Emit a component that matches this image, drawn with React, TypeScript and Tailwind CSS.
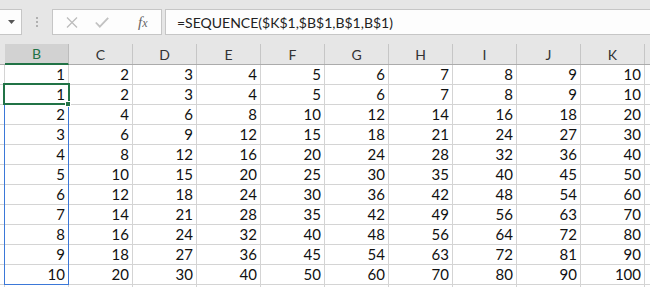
import React from 'react';

// Excel-ish sheet: formula bar + grid B..L, SEQUENCE spill in B2:B11
const COLS = ['B', 'C', 'D', 'E', 'F', 'G', 'H', 'I', 'J', 'K'];
const cellFont = { fontFamily: 'Lato, "Liberation Sans", sans-serif' };

function rowValues(r: number): number[] {
  // row 0 = header row 1..10, rows 1..10 = multiplication table
  return COLS.map((_, i) => (r === 0 ? i + 1 : r * (i + 1)));
}

export default function App() {
  const rows = Array.from({ length: 12 }, (_, r) => r);
  return (
    <div className="w-[650px] h-[287px] overflow-hidden bg-white relative select-none" style={cellFont}>
      {/* ── formula bar ── */}
      <div className="h-[44px] bg-[#e6e6e6] flex items-start pt-[9px]">
        <div className="w-[22px] h-[26px] bg-[#fdfdfd] border border-l-0 border-[#c6c6c6] flex items-center justify-center pl-[1px]">
          <svg width="7" height="4" viewBox="0 0 7 4"><path d="M0 0h7L3.5 4z" fill="#555" /></svg>
        </div>
        <div className="w-[30px] h-[26px] flex flex-col items-center justify-center gap-[2px]">
          <span className="w-[2px] h-[2px] bg-[#b0b0b0]" />
          <span className="w-[2px] h-[2px] bg-[#b0b0b0]" />
          <span className="w-[2px] h-[2px] bg-[#b0b0b0]" />
        </div>
        <div className="w-[110px] h-[26px] bg-[#fdfdfd] border border-[#c6c6c6] flex items-center">
          <svg className="ml-[13px]" width="12" height="11" viewBox="0 0 12 11">
            <path d="M1 0.5l10 10M11 0.5l-10 10" stroke="#bdbdbd" strokeWidth="1.3" fill="none" />
          </svg>
          <svg className="ml-[17px]" width="14" height="11" viewBox="0 0 14 11">
            <path d="M0.8 5.5l4 4.2L13.2 0.8" stroke="#c2c2c2" strokeWidth="1.8" fill="none" />
          </svg>
          <span className="ml-[29px] text-[15px] leading-none italic text-[#666]" style={{ fontFamily: '"Liberation Serif", serif' }}>
            f<span className="text-[12px]">x</span>
          </span>
        </div>
        <div className="ml-[3px] flex-1 h-[26px] bg-[#fdfdfd] border border-r-0 border-[#c6c6c6] flex items-center pl-[11px]">
          <span className="text-[14px] text-[#222]" style={{ fontFamily: 'Lato, "Noto Sans", sans-serif' }}>
            =SEQUENCE($K$1,$B$1,B$1,B$1)
          </span>
        </div>
      </div>

      {/* ── column headers ── */}
      <div className="h-[21px] flex bg-[#e6e6e6] border-b border-[#ababab]">
        <div className="w-[5px] shrink-0" />
        {COLS.map((c) => (
          <div
            key={c}
            className={`w-[64px] shrink-0 flex items-center justify-center text-[14px] ${
              c === 'B'
                ? 'bg-[#d2d2d2] text-[#217346] border-b-2 border-[#217346] -mb-[1px] border-r border-r-[#bcbcbc]'
                : 'text-[#333] border-r border-[#c6c6c6]'
            }`}
          >
            {c}
          </div>
        ))}
        <div className="flex-1" />
      </div>

      {/* ── grid ── */}
      <div className="flex flex-col">
        {rows.map((r) => (
          <div key={r} className="h-[20px] flex shrink-0">
            <div className="w-[5px] shrink-0 border-r border-b border-[#d4d4d4]" />
            {(r <= 10 ? rowValues(r) : COLS.map(() => null)).map((v, i) => (
              <div
                key={i}
                className="w-[64px] shrink-0 border-r border-b border-[#d4d4d4] flex items-center justify-end pr-[3px] text-[15px] text-[#111] leading-none"
              >
                {v}
              </div>
            ))}
            <div className="flex-1 border-b border-[#d4d4d4]" />
          </div>
        ))}
      </div>

      {/* spill range border B2:B11 */}
      <div className="absolute left-[4px] top-[84px] w-[65px] h-[201px] border border-[#3b78d8] pointer-events-none" />
      {/* active cell B2 */}
      <div className="absolute left-[3px] top-[83px] w-[67px] h-[22px] border-2 border-[#217346] pointer-events-none" />
      <div className="absolute left-[65px] top-[101px] w-[6px] h-[6px] bg-[#217346] border border-white pointer-events-none" />
    </div>
  );
}
